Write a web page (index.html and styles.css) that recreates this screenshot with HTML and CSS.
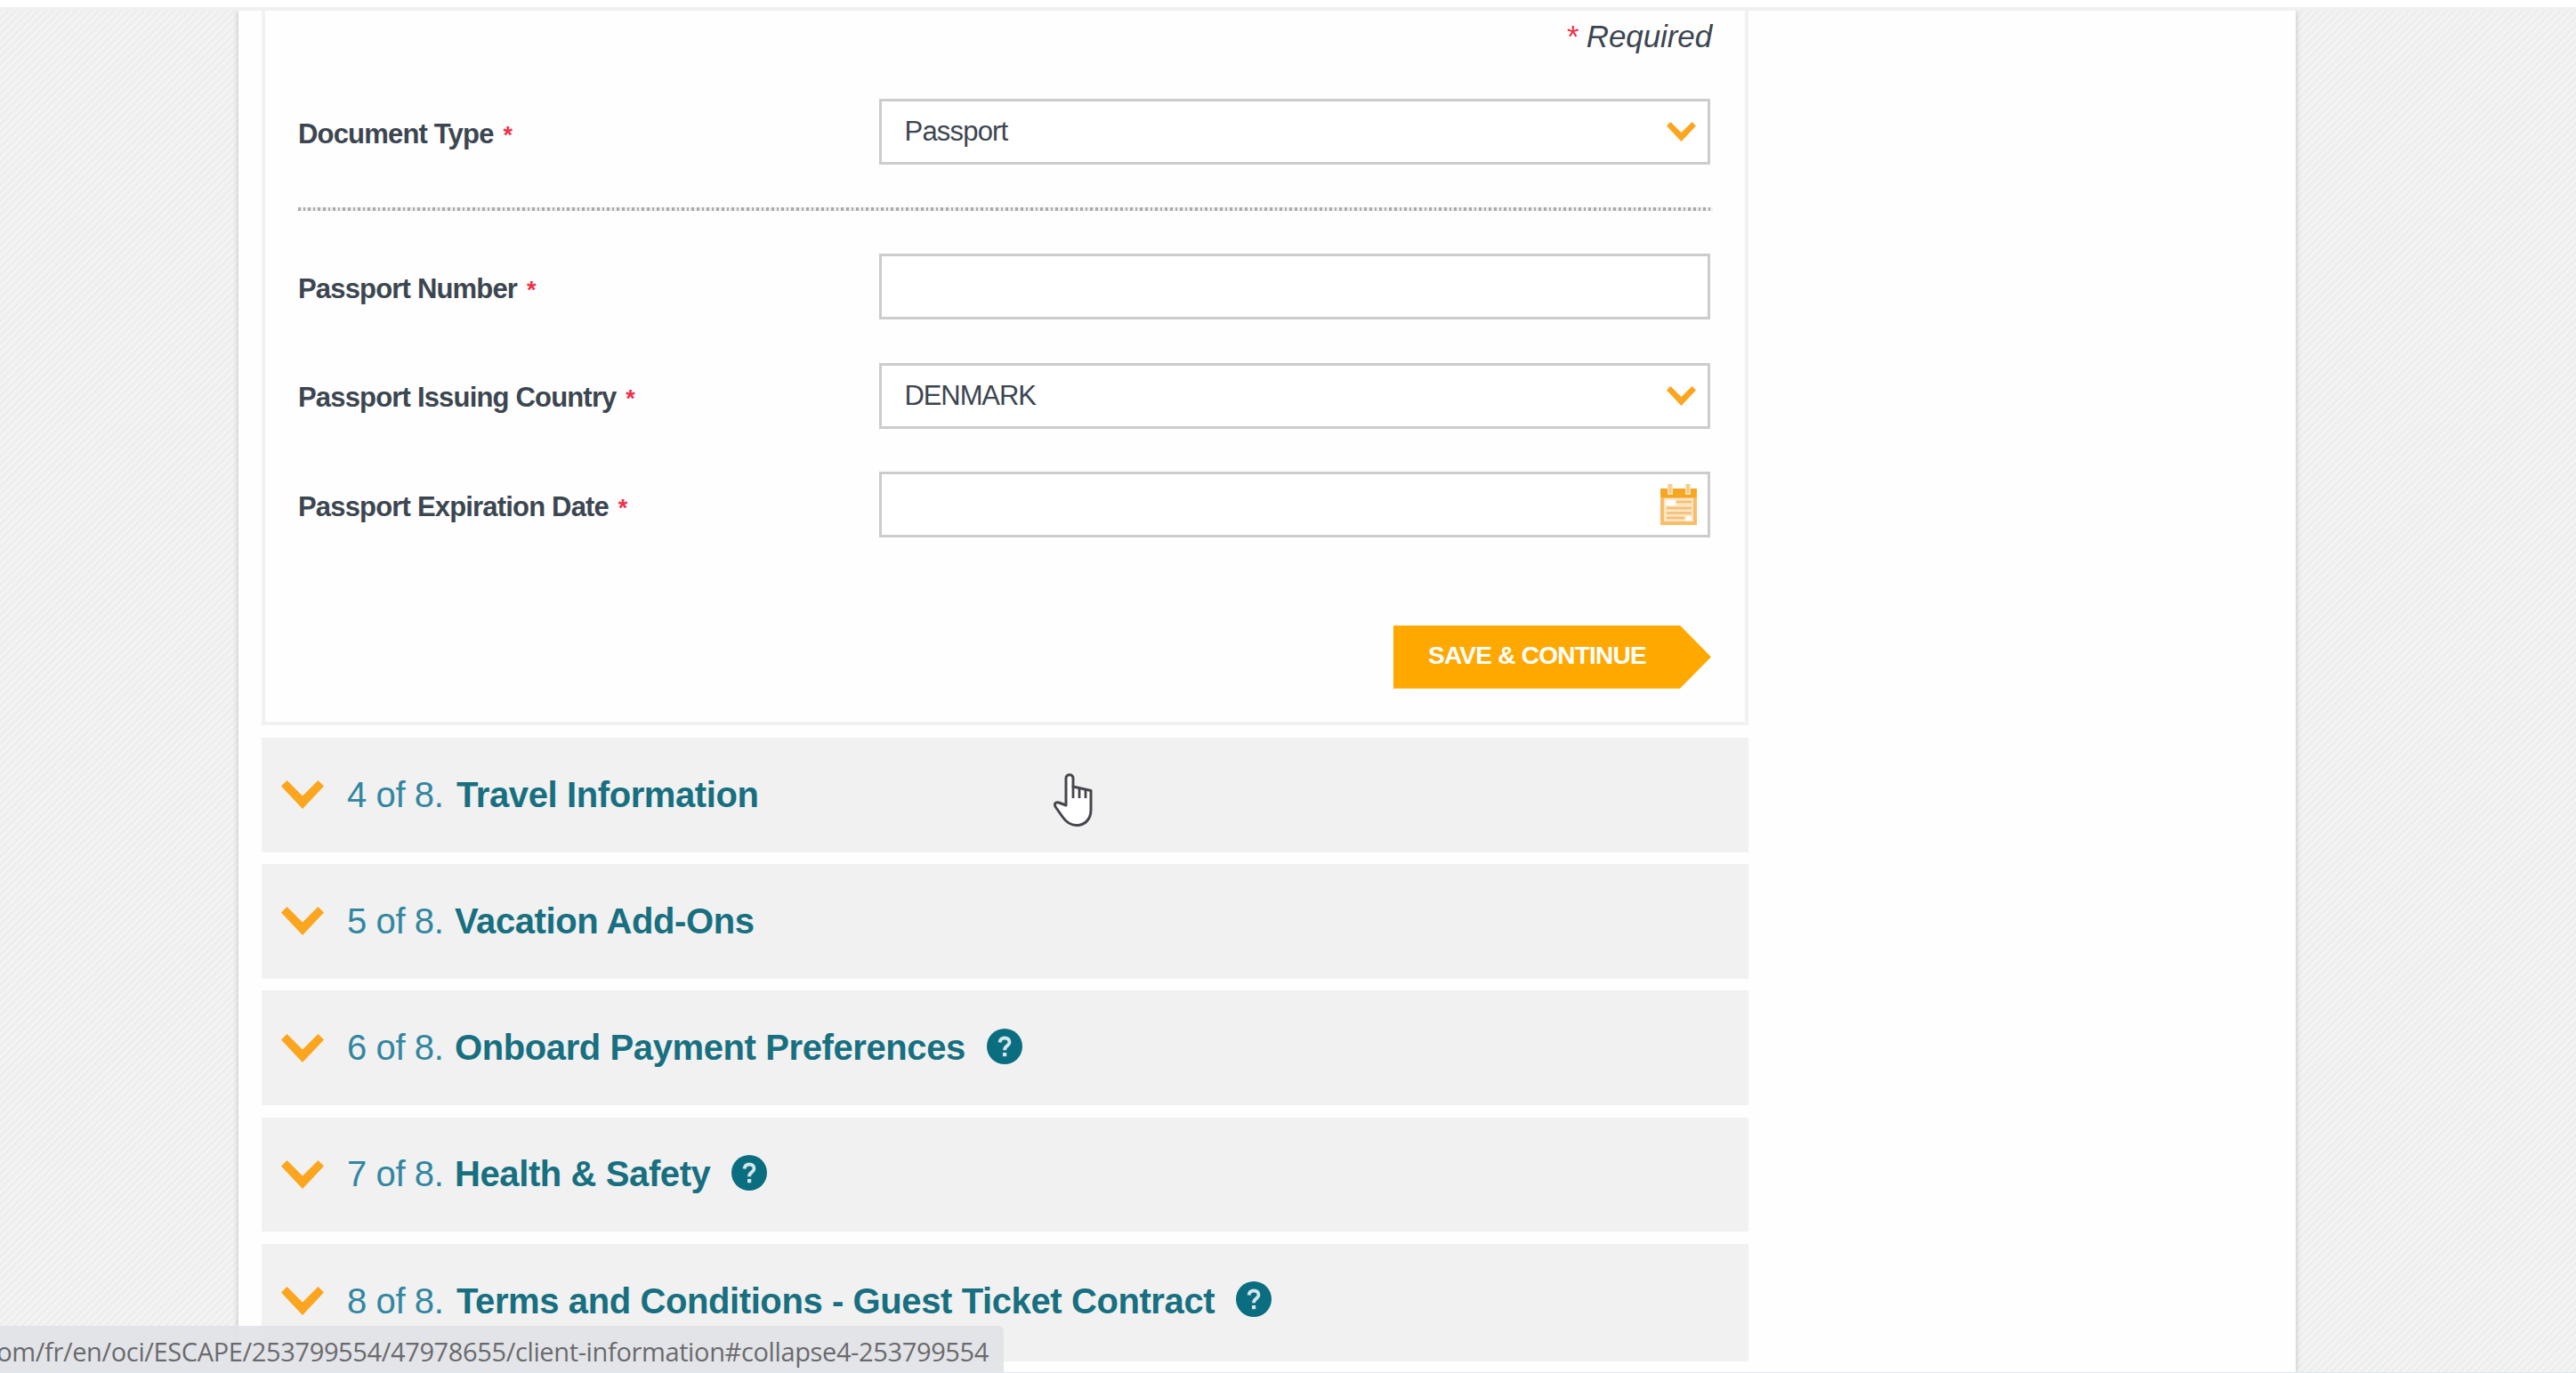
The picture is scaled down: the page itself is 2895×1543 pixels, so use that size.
FILE: index.html
```
<!DOCTYPE html>
<html lang="en">
<head>
<meta charset="utf-8">
<title>Client Information</title>
<link rel="stylesheet" href="styles.css">
</head>
<body>
<svg class="defs" width="0" height="0" aria-hidden="true">
  <symbol id="chevron" viewBox="0 0 48 32"><path d="M0 6.5 6.5 0 24 17.5 41.500 0 48 6.500 24 32Z" fill="#fca51f"/></symbol>
  <symbol id="help" viewBox="0 0 40 40"><circle cx="20" cy="20" r="20" fill="#0b6e80"/><path d="M14.500 15.500C15 12 17 10.500 20 10.500c3.500 0 5.500 1.900 5.500 4.700 0 4-5.500 4.300-5.500 9" fill="none" stroke="#d4e6ea" stroke-width="3.800"/><rect x="18" y="27" width="4.200" height="4.200" fill="#d4e6ea"/></symbol>
</svg>
<div class="topbar"></div>
<main class="page">
  <section class="panel">
    <p class="required"><span class="star">*</span> <span>Required</span></p>
    <div class="row first">
      <label class="label">Document Type <span class="star">*</span></label>
      <div class="field"><span>Passport</span><svg class="arrow"><use href="#chevron"/></svg></div>
    </div>
    <div class="dots"></div>
    <div class="row">
      <label class="label">Passport Number <span class="star">*</span></label>
      <div class="field"></div>
    </div>
    <div class="row">
      <label class="label">Passport Issuing Country <span class="star">*</span></label>
      <div class="field"><span class="country">DENMARK</span><svg class="arrow"><use href="#chevron"/></svg></div>
    </div>
    <div class="row">
      <label class="label">Passport Expiration Date <span class="star">*</span></label>
      <div class="field"><svg class="calendar" viewBox="0 0 41 46"><path d="M0 5h41v41H0Z" fill="#f8bd68"/><path d="M0 5h41v10H0Z" fill="#f5a623"/><path d="M4 16h33v26H4Z" fill="#ffe6c0"/><path d="M6 18h11v6H6ZM29 36h6v5h-6Z" fill="#fff"/><path d="M18 20h17M7 27h28M7 32.500h28M7 38h20" stroke="#f3bd76" stroke-width="2.600"/><path d="M11 0v12M31 0v12" stroke="#fde0b4" stroke-width="6"/><path d="M11 0v10M31 0v10" stroke="#f8c884" stroke-width="3"/></svg></div>
    </div>
    <div class="actions"><button class="save">SAVE &amp; CONTINUE</button></div>
  </section>
  <section class="steps">
    <div class="step"><svg class="chev"><use href="#chevron"/></svg><span class="num">4 of 8.</span><b>Travel Information</b></div>
    <div class="step"><svg class="chev"><use href="#chevron"/></svg><span class="num near">5 of 8.</span><b>Vacation Add-Ons</b></div>
    <div class="step"><svg class="chev"><use href="#chevron"/></svg><span class="num near">6 of 8.</span><b>Onboard Payment Preferences</b><svg class="help"><use href="#help"/></svg></div>
    <div class="step"><svg class="chev"><use href="#chevron"/></svg><span class="num near">7 of 8.</span><b>Health &amp; Safety</b><svg class="help"><use href="#help"/></svg></div>
    <div class="step last"><svg class="chev"><use href="#chevron"/></svg><span class="num">8 of 8.</span><b>Terms and Conditions - Guest Ticket Contract</b><svg class="help"><use href="#help"/></svg></div>
  </section>
</main>
<svg class="cursor" viewBox="0 0 44 60"><path d="M14.500 35V5.500c0-5 8-5 8 0V15l20 4.500V41c0 11-7 17.500-16 17.500-8 0-12-4-15.500-9L2.500 37.500c-1.500-4 1-5.500 4-4.500l8 3Z" fill="#fff" stroke="#46464e" stroke-width="3" stroke-linejoin="round"/><path d="M22.500 14v14M29.500 17v11M36.500 18v10" stroke="#46464e" stroke-width="2.800"/></svg>
<div class="status"><span>com/fr/en/oci/ESCAPE/253799554/47978655/client-information#collapse4-253799554</span></div>
</body>
</html>
```
FILE: styles.css
```
* { box-sizing: border-box; }
body {
  margin: 0;
  height: 1543px;
  overflow: hidden;
  position: relative;
  font-family: "Liberation Sans", Arial, sans-serif;
  color: #3c4650;
  background: repeating-linear-gradient(135deg, #f5f5f5 0, #ececec 3px, #f5f5f5 6px);
  border-bottom: 1px solid #dfe7ee;
}
.defs { position: absolute; }
.topbar { height: 12px; background: #fff; border-bottom: 4px solid #f0f0f0; position: relative; }
.page {
  width: 2312px;
  height: 1530px;
  margin-left: 268px;
  padding-left: 26px;
  background: #fefefe;
  box-shadow: 0 0 6px #bbb;
  clip-path: inset(0 -10px);
}
.panel {
  width: 1671px;
  height: 803px;
  padding: 0 37px;
  border: 4px solid #f1f1f1;
  border-top: 0;
}
.required { margin: 0; height: 99px; padding-top: 7px; text-align: right; font-size: 35px; line-height: 44px; font-style: italic; letter-spacing: -.1px; }
.star { color: #f0304a; }
.row { display: flex; align-items: center; height: 74px; margin-bottom: 48.600px; }
.row.first { margin-bottom: 48px; }
.label { width: 652.500px; font-weight: bold; font-size: 31px; letter-spacing: -.82px; white-space: nowrap; padding-top: 5px; }
.label .star { font-size: 27px; margin-left: 3px; }
.field {
  flex: none;
  display: flex;
  align-items: center;
  justify-content: space-between;
  width: 934px;
  height: 74px;
  padding: 0 12px 0 26px;
  border: 3px solid #ccc;
  background: #fff;
  font-size: 31px;
  letter-spacing: -.8px;
}
.country { letter-spacing: -1.100px; }
.arrow { width: 35px; height: 22px; }
.calendar { width: 41px; height: 46px; margin-left: auto; }
.dots { height: 4px; width: 1590px; margin: 0 0 48px; background: repeating-linear-gradient(90deg, #aaa 0 2.600px, #eee 2.600px 5.600px); }
.actions { display: flex; justify-content: flex-end; padding-top: 50px; width: 1588px; }
.save {
  width: 357px;
  height: 71px;
  padding: 0 0 2px 39px;
  border: 0;
  text-align: left;
  background: #ffa900;
  color: #fff;
  font: bold 28px "Liberation Sans", Arial, sans-serif;
  letter-spacing: -.75px;
  clip-path: polygon(0 0, 322px 0, 100% 50%, 322px 100%, 0 100%);
}
.steps { display: flex; flex-direction: column; gap: 13.700px; margin-top: 14px; width: 1671px; }
.step { display: flex; align-items: center; height: 128.500px; padding-left: 22px; background: #f1f1f1; color: #176f80; font-size: 40px; letter-spacing: -.4px; white-space: nowrap; }
.step.last { height: 132px; padding-bottom: 3px; }
.chev { width: 48px; height: 32px; flex: none; }
.num { width: 123px; margin-left: 26px; color: #3286a0; }
.num.near { width: 121px; }
.help { width: 40px; height: 40px; margin: 0 0 4px 24px; flex: none; }
.cursor { position: absolute; left: 1183px; top: 869px; width: 45px; height: 60px; }
.status {
  position: absolute;
  left: 0;
  bottom: 0;
  width: 1128px;
  height: 52px;
  padding: 4px 17px 0 0;
  display: flex;
  justify-content: flex-end;
  align-items: center;
  background: rgba(225, 226, 229, .9);
  border-radius: 0 6px 0 0;
  color: #6a6a6e;
  font: 29px "Open Sans", "Noto Sans", sans-serif;
  letter-spacing: -.37px;
  white-space: nowrap;
}
```
